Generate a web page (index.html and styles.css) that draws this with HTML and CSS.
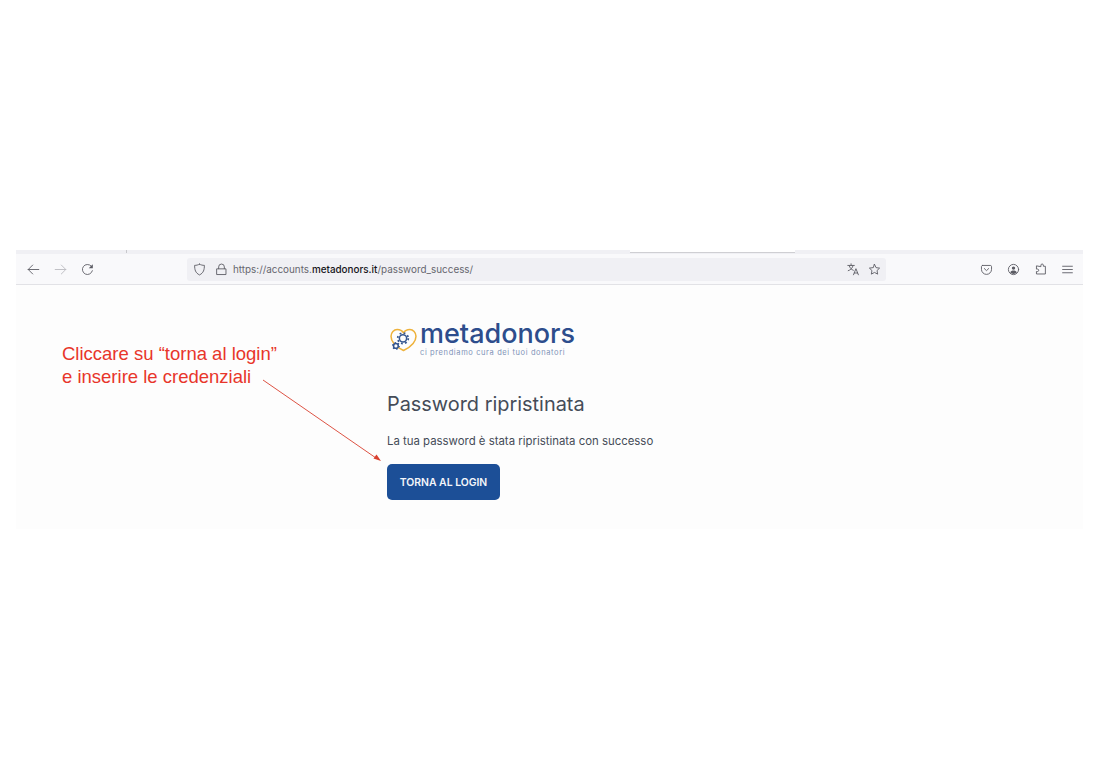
FILE: index.html
```html
<!DOCTYPE html>
<html lang="it">
<head>
<meta charset="utf-8">
<title>Password ripristinata</title>
<link rel="stylesheet" href="styles.css">
</head>
<body>
<div class="shot">
  <div class="tabstrip"><span class="tab-sep"></span><span class="tab-active"></span></div>
  <div class="toolbar">
    <div class="nav">
      <svg class="ic" viewBox="0 0 16 16"><path d="M14.500 8H1.500M7 2.500 1.500 8 7 13.500" class="st dark"/></svg>
      <svg class="ic" viewBox="0 0 16 16"><path d="M1.500 8h13M9 2.500 14.500 8 9 13.500" class="st faint"/></svg>
      <svg class="ic" viewBox="0 0 16 16"><path d="M14 9.500A6.200 6.200 0 1 1 12.500 3.700" class="st dark"/><path d="M14.500 1.500v5h-5z" class="fill-dark"/></svg>
    </div>
    <div class="urlbar">
      <svg class="ic shield" viewBox="0 0 16 16"><path d="M8 1.500c2 1 3.800 1.400 6 1.400 0 5.500-1 9.300-6 11.800C3 12.200 2 8.400 2 2.900c2.200 0 4-.4 6-1.400z" class="st dark"/></svg>
      <svg class="ic lock" viewBox="0 0 16 16"><path d="M4.500 7V4.800a3.500 3.500 0 0 1 7 0V7M2.500 7.200h11v7h-11z" class="st dark"/></svg>
      <span class="url">https://accounts.<b>metadonors.it</b>/password_success/</span>
      <span class="url-actions">
        <svg class="ic" viewBox="0 0 16 16"><path d="M1 3h8M5 1v2M7.500 3C7 6 4.500 8.500 1.500 9.500M2.800 3.500c.7 2.500 2.500 4.500 5 5.500" class="st dark"/><path d="M8 14.500l3-7.500 3 7.500M9 12.300h4" class="st dark"/></svg>
        <svg class="ic" viewBox="0 0 16 16"><path d="M8 1.700l1.900 4 4.400.6-3.200 3 .8 4.400L8 11.600l-3.900 2.100.8-4.400-3.200-3 4.400-.6z" class="st dark"/></svg>
      </span>
    </div>
    <div class="tools">
      <svg class="ic" viewBox="0 0 16 16"><path d="M3.200 3h9.600c.8 0 1.400.6 1.400 1.400v3.400A6.200 6.200 0 0 1 8 14a6.200 6.200 0 0 1-6.200-6.200V4.400C1.800 3.600 2.400 3 3.200 3z" class="st dark"/><path d="M5.300 6.800 8 9.400l2.700-2.600" class="st dark"/></svg>
      <svg class="ic" viewBox="0 0 16 16"><circle cx="8" cy="8" r="6.300" class="st dark"/><circle cx="8" cy="6.300" r="2.100" class="fill-dark"/><path d="M4 11.800c.6-1.800 2.100-2.500 4-2.500s3.400.7 4 2.500C10.800 13 9.500 13.500 8 13.500S5.200 13 4 11.800z" class="fill-dark"/></svg>
      <svg class="ic" viewBox="0 0 16 16"><path d="M8.500 4V2.500c0-1.700 3-1.700 3 0V4H14v9.500H3v-3h1.500c1.700 0 1.700-3 0-3H3V4z" class="st dark"/></svg>
      <svg class="ic" viewBox="0 0 16 16"><path d="M2 4h12M2 8h12M2 12h12" class="st dark"/></svg>
    </div>
  </div>
  <main class="page">
    <div class="logo">
      <svg class="logo-mark" viewBox="0 0 32 28">
        <path d="M16 26.500C8 22.500 1.200 16 1.200 9.500 1.200 5 4.700 1.500 8.500 1.500c3 0 6 1.500 7.500 4 1.500-2.500 4.500-4 7.500-4 3.800 0 7.300 3.500 7.300 8C30.800 16 24 22.500 16 26.500z" class="heart"/>
        <circle cx="15.400" cy="12" r="4.300" class="gear"/>
        <circle cx="15.400" cy="12" r="6.300" class="gear-teeth"/>
        <circle cx="7" cy="21" r="2.800" class="gear"/>
        <circle cx="7" cy="21" r="3.900" class="gear-teeth small"/>
      </svg>
      <div class="logo-text">
        <div class="logo-name">metadonors</div>
        <div class="logo-tag">ci prendiamo cura dei tuoi donatori</div>
      </div>
    </div>
    <h1>Password ripristinata</h1>
    <p>La tua password è stata ripristinata con successo</p>
    <a class="btn" href="#">TORNA AL LOGIN</a>
  </main>
  <div class="note">Cliccare su “torna al login”<br>e inserire le credenziali</div>
  <svg class="arrow" viewBox="0 0 130 90">
    <path d="M1 1 114 79" class="arrow-line"/>
    <path d="M119 82 111.500 79.500 114.500 75.500z" class="arrow-head"/>
  </svg>
</div>
</body>
</html>
```
FILE: styles.css
```css
html, body { margin: 0; padding: 0; background: #fff; }
body { font-family: Inter, "Liberation Sans", sans-serif; height: 778px; overflow: hidden; }
.shot { position: relative; width: 1067px; margin: 250px 0 0 16px; background: #fdfdfd; height: 279px; }
.tabstrip { position: relative; height: 4px; background: #f0f0f4; }
.tab-sep { position: absolute; left: 110px; top: 0; width: 1px; height: 3px; background: #c8c8cc; }
.tab-active { position: absolute; left: 614px; top: 0; width: 165px; height: 2px; background: #fff; border-bottom: 1px solid #cfcfd3; }
.toolbar { display: flex; align-items: center; height: 30px; background: #f9f9fb; border-bottom: 1.500px solid #e2e2e6; box-sizing: content-box; }
.ic { width: 13px; height: 13px; flex: none; display: block; }
.st { fill: none; stroke-width: 1.100; stroke-linecap: round; stroke-linejoin: round; }
.dark { stroke: #5b5b63; }
.faint { stroke: #b9b9bf; }
.fill-dark { fill: #5b5b63; }
.nav { display: flex; gap: 14px; padding-left: 11px; width: 171px; box-sizing: border-box; }
.urlbar { display: flex; align-items: center; width: 699px; height: 23px; background: #f0f0f4; border-radius: 3px; padding: 0 5px 0 6px; box-sizing: border-box; }
.shield { margin-right: 9px; }
.lock { margin-right: 5px; }
.url { font-size: 9.900px; color: #66666e; white-space: nowrap; }
.url b { font-weight: 500; color: #15141a; }
.url-actions { display: flex; gap: 8px; margin-left: auto; }
.tools { display: flex; gap: 14px; margin-left: 94px; }
.page { padding: 35px 0 0 371px; color: #3d4450; }
.logo { display: flex; align-items: flex-start; height: 37px; }
.logo-mark { width: 27px; height: 24px; margin: 8px 3px 0 3px; flex: none; }
.heart { fill: none; stroke: #eeb23b; stroke-width: 1.800; stroke-linejoin: round; }
.gear { fill: #fdfdfd; stroke: #34558f; stroke-width: 1.800; }
.gear-teeth { fill: none; stroke: #34558f; stroke-width: 2; stroke-dasharray: 2.200 2.750; }
.gear-teeth.small { stroke-width: 1.600; stroke-dasharray: 1.600 2.480; }
.logo-name { font-size: 27px; line-height: 28px; color: #2d4d8c; font-weight: 500; white-space: nowrap; }
.logo-tag { font-size: 7.500px; line-height: 9px; color: #7f93b8; letter-spacing: 0.620px; white-space: nowrap; }
h1 { margin: 33px 0 0; font-size: 19.900px; line-height: 28px; font-weight: 400; color: #454c58; }
p { margin: 15px 0 0; font-size: 11.400px; line-height: 16px; color: #454c58; }
.btn { display: inline-block; margin-top: 15px; width: 113px; height: 36px; line-height: 37px; text-align: center; background: #1c4f97; color: #f4f6fa; border-radius: 5px; font-size: 10.400px; font-weight: 600; text-decoration: none; }
.note { position: absolute; left: 46px; top: 92px; font-family: "Liberation Sans", Arial, sans-serif; font-size: 18.500px; line-height: 23px; color: #e8352a; white-space: nowrap; }
.arrow { position: absolute; left: 246px; top: 129px; width: 130px; height: 90px; }
.arrow-line { fill: none; stroke: #d9402f; stroke-width: 0.900; }
.arrow-head { fill: #d9402f; }
```
